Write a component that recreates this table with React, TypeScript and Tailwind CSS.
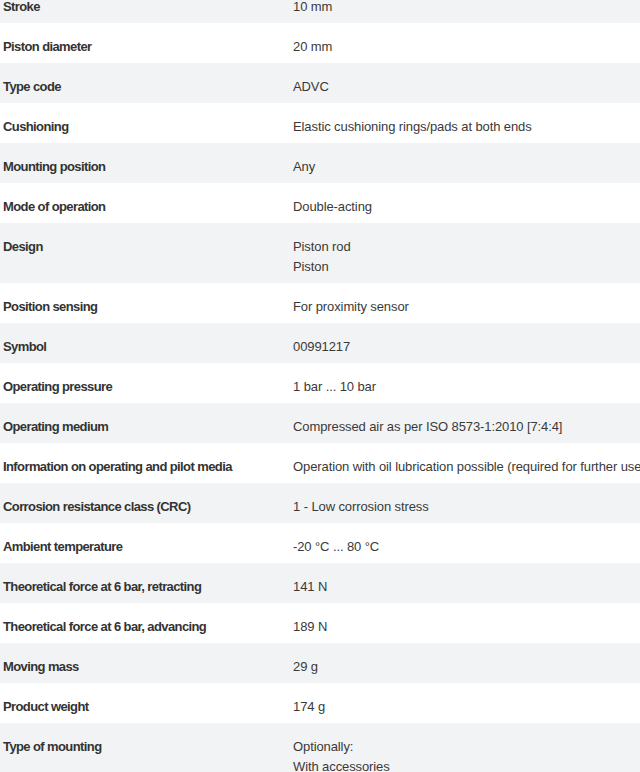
type Spec = {
  label: string;
  value: string[];
};

// Technical data rows as shown on the product page
const specs: Spec[] = [
  { label: "Stroke", value: ["10 mm"] },
  { label: "Piston diameter", value: ["20 mm"] },
  { label: "Type code", value: ["ADVC"] },
  { label: "Cushioning", value: ["Elastic cushioning rings/pads at both ends"] },
  { label: "Mounting position", value: ["Any"] },
  { label: "Mode of operation", value: ["Double-acting"] },
  { label: "Design", value: ["Piston rod", "Piston"] },
  { label: "Position sensing", value: ["For proximity sensor"] },
  { label: "Symbol", value: ["00991217"] },
  { label: "Operating pressure", value: ["1 bar ... 10 bar"] },
  { label: "Operating medium", value: ["Compressed air as per ISO 8573-1:2010 [7:4:4]"] },
  {
    label: "Information on operating and pilot media",
    value: ["Operation with oil lubrication possible (required for further use)"],
  },
  { label: "Corrosion resistance class (CRC)", value: ["1 - Low corrosion stress"] },
  { label: "Ambient temperature", value: ["-20 °C ... 80 °C"] },
  { label: "Theoretical force at 6 bar, retracting", value: ["141 N"] },
  { label: "Theoretical force at 6 bar, advancing", value: ["189 N"] },
  { label: "Moving mass", value: ["29 g"] },
  { label: "Product weight", value: ["174 g"] },
  { label: "Type of mounting", value: ["Optionally:", "With accessories"] },
];

export default function App() {
  return (
    <div className="h-[772px] w-[640px] overflow-hidden bg-white font-['Liberation_Sans',Arial,sans-serif] text-[13px] text-[#333]">
      <div className="-mt-[17px]">
        {specs.map((row, i) => (
          <div
            key={row.label}
            className={`flex pb-[6px] pt-[14px] leading-[20px] ${i % 2 === 0 ? "bg-[#f2f3f4]" : "bg-white"}`}
          >
            <div className="w-[293px] shrink-0 pl-[3px] font-bold tracking-[-0.6px] text-[#333]">
              {row.label}
            </div>
            <div className="whitespace-nowrap tracking-[-0.1px] text-[#3a3a3a]">
              {row.value.map((line) => (
                <div key={line}>{line}</div>
              ))}
            </div>
          </div>
        ))}
      </div>
    </div>
  );
}
